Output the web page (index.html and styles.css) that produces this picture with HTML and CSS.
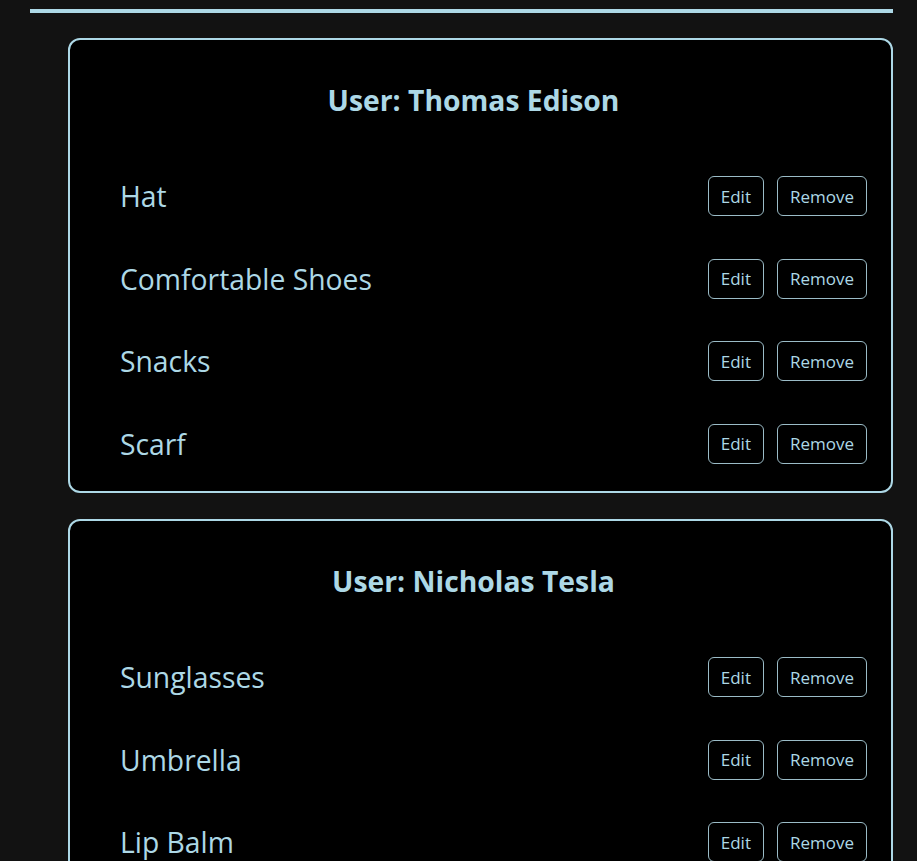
FILE: index.html
```html
<!DOCTYPE html>
<html lang="en">
<head>
<meta charset="utf-8">
<title>Users</title>
<link rel="stylesheet" href="styles.css">
</head>
<body>
<main class="page">
  <hr class="rule">
  <div class="users">
    <section class="card">
      <h2 class="card-title">User: Thomas Edison</h2>
      <ul class="items">
        <li class="item"><span class="item-name">Hat</span><div class="actions"><button class="btn">Edit</button><button class="btn">Remove</button></div></li>
        <li class="item"><span class="item-name">Comfortable Shoes</span><div class="actions"><button class="btn">Edit</button><button class="btn">Remove</button></div></li>
        <li class="item"><span class="item-name">Snacks</span><div class="actions"><button class="btn">Edit</button><button class="btn">Remove</button></div></li>
        <li class="item"><span class="item-name">Scarf</span><div class="actions"><button class="btn">Edit</button><button class="btn">Remove</button></div></li>
      </ul>
    </section>
    <section class="card">
      <h2 class="card-title">User: Nicholas Tesla</h2>
      <ul class="items">
        <li class="item"><span class="item-name">Sunglasses</span><div class="actions"><button class="btn">Edit</button><button class="btn">Remove</button></div></li>
        <li class="item"><span class="item-name">Umbrella</span><div class="actions"><button class="btn">Edit</button><button class="btn">Remove</button></div></li>
        <li class="item"><span class="item-name">Lip Balm</span><div class="actions"><button class="btn">Edit</button><button class="btn">Remove</button></div></li>
      </ul>
    </section>
  </div>
</main>
</body>
</html>
```

FILE: styles.css
```css
html, body {
  margin: 0;
  padding: 0;
  background: #121212;
}

body {
  font-family: "Open Sans", "Noto Sans", sans-serif;
  color: #add8e6;
}

.page {
  padding: 9px 24px 0 30px;
}

.rule {
  margin: 0;
  border: 0;
  height: 4px;
  background: #add8e6;
}

.users {
  display: flex;
  flex-direction: column;
  gap: 26px;
  margin-top: 25px;
  padding-left: 38px;
}

.card {
  background: #000;
  border: 2px solid #add8e6;
  border-radius: 12px;
  padding: 0 24px 6px 10px;
}

.card-title {
  margin: 42px 0 37px;
  text-align: center;
  font-size: 28.3px;
  line-height: 36px;
  font-weight: 700;
}

.items {
  list-style: none;
  margin: 0;
  padding: 0 0 0 40px;
}

.item {
  display: flex;
  align-items: center;
  justify-content: space-between;
  padding: 21px 0 21.5px;
}

.item-name {
  font-size: 28.3px;
  line-height: 40px;
}

.actions {
  display: flex;
  gap: 13px;
}

.btn {
  height: 40px;
  padding: 0 12px;
  background: #000;
  color: #add8e6;
  border: 1px solid #9bbcc7;
  border-radius: 6px;
  font-family: inherit;
  font-size: 17px;
}
```
